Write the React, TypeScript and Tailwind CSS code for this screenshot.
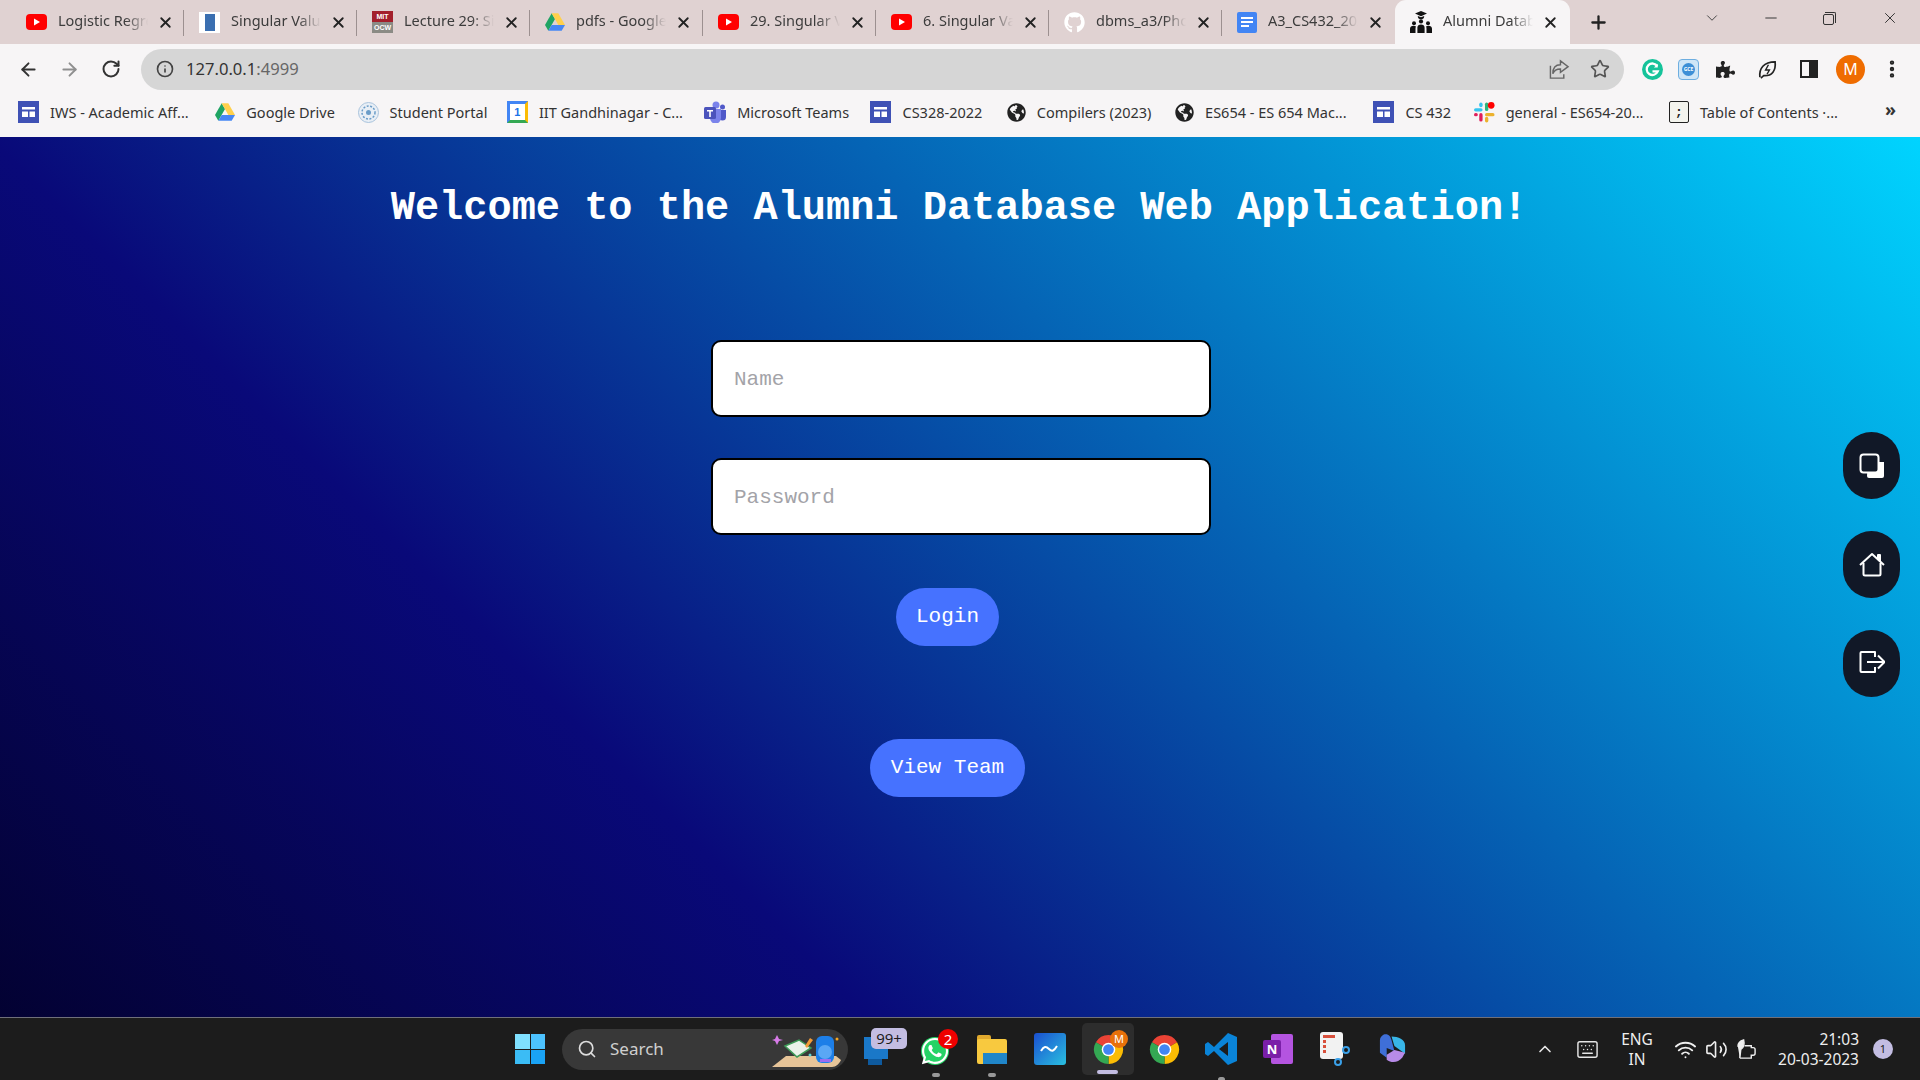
import { ArrowLeft, ArrowRight, ChevronDown, ChevronUp, Info, Keyboard, Minus, MoreVertical, Plus, RotateCw, Search, Star, Volume2, Wifi, X } from "lucide-react";
import { FaGithub, FaGlobeAmericas, FaPuzzlePiece, FaWhatsapp } from "react-icons/fa";
import type { ReactNode } from "react";

const ui = "font-['Noto_Sans','Open_Sans',sans-serif]";
const mono = "font-['Liberation_Mono',monospace]";

function Yt() {
  return (
    <svg viewBox="0 0 21 16" className="w-[21px] h-[16px] shrink-0">
      <rect width="21" height="16" rx="4" fill="#ff0000" />
      <path d="M8 4.5 14 8 8 11.5Z" fill="#fff" />
    </svg>
  );
}

function Drive({ size = "w-[20px] h-[18px]" }: { size?: string }) {
  return (
    <svg viewBox="0 0 24 21" className={`${size} shrink-0`}>
      <path d="M8 0 12 7 4 21 0 14Z" fill="#1fa463" />
      <path d="M8 0h8l8 14h-8Z" fill="#ffd04b" />
      <path d="M4 21 8 14h16l-4 7Z" fill="#4687f4" />
    </svg>
  );
}

function DocBlue() {
  return (
    <div className="w-[21px] h-[21px] bg-white flex items-center justify-center shrink-0">
      <div className="w-[10px] h-[17px] bg-[#3b6fb0]" />
    </div>
  );
}

function Ocw() {
  return (
    <div className="w-[21px] h-[22px] flex flex-col shrink-0 font-['Liberation_Sans',sans-serif] font-bold text-[7px] leading-[11px] text-center text-white overflow-hidden">
      <div className="bg-[#a3202c]">MIT</div>
      <div className="bg-[#8b8b85]">OCW</div>
    </div>
  );
}

function GDoc() {
  return (
    <div className="w-[20px] h-[21px] bg-[#4285f4] rounded-[2px] flex flex-col gap-[2px] items-start justify-center px-[4px] shrink-0">
      <div className="w-full h-[2px] bg-white" />
      <div className="w-full h-[2px] bg-white" />
      <div className="w-[8px] h-[2px] bg-white" />
    </div>
  );
}

function Alumni() {
  return (
    <svg viewBox="0 0 22 22" className="w-[22px] h-[22px] shrink-0" fill="#111">
      <path d="M11 0 17 2.6 11 5.2 5 2.6Z" />
      <path d="M7.8 5a3.2 3.2 0 0 0 6.4 0L11 6.3Z" />
      <circle cx="11" cy="10.4" r="2.1" />
      <circle cx="4" cy="12.2" r="2" />
      <circle cx="18" cy="12.2" r="2" />
      <path d="M7.4 22v-5.2c0-2 1.5-3.2 3.6-3.2s3.6 1.2 3.6 3.2V22Z" />
      <path d="M0 22v-4.2c0-2 1.5-3 3.5-3 1 0 1.8.2 2.5.8-.4.6-.5 1.3-.5 2.2V22Z" />
      <path d="M22 22v-4.2c0-2-1.5-3-3.5-3-1 0-1.8.2-2.5.8.4.6.5 1.3.5 2.2V22Z" />
    </svg>
  );
}

function Sites() {
  return (
    <svg viewBox="0 0 21 22" className="w-[21px] h-[22px] shrink-0">
      <rect width="21" height="22" fill="#3f51b5" />
      <path d="M4 6h13v2.5H4ZM4 10.500h6V16H4ZM11.500 10.500H17V16h-5.500Z" fill="#fff" />
    </svg>
  );
}

function Portal() {
  return (
    <svg viewBox="0 0 21 21" className="w-[21px] h-[21px] shrink-0">
      <circle cx="10.500" cy="10.500" r="10" fill="#e8eef5" stroke="#a9c3dc" />
      <circle cx="10.500" cy="10.500" r="6.500" fill="none" stroke="#6a9cc8" strokeWidth="1.500" strokeDasharray="2 1.500" />
      <circle cx="10.500" cy="10.500" r="2.500" fill="#6a9cc8" />
    </svg>
  );
}

function Cal() {
  return (
    <div className="w-[21px] h-[22px] shrink-0 bg-white border-t-[3px] border-t-[#4285f4] border-l-[3px] border-l-[#4285f4] border-r-[3px] border-r-[#fbbc04] border-b-[3px] border-b-[#34a853] flex items-center justify-center font-['Liberation_Sans',sans-serif] font-bold text-[11px] leading-none text-[#1a73e8]">
      1
    </div>
  );
}

function Teams() {
  return (
    <svg viewBox="0 0 22 22" className="w-[22px] h-[22px] shrink-0">
      <circle cx="12" cy="4" r="3.500" fill="#7b83eb" />
      <circle cx="18.500" cy="6" r="2.500" fill="#5059c9" />
      <path d="M15 9h7v7a3.500 3.500 0 0 1-7 0Z" fill="#5059c9" />
      <path d="M6 8h11v9a5 5 0 0 1-11 0Z" fill="#7b83eb" />
      <rect y="6" width="12" height="12" rx="1.500" fill="#4b53bc" />
      <path d="M3 9h6v1.500H6.800V16H5.200v-5.500H3Z" fill="#fff" />
    </svg>
  );
}

function Globe() {
  return <FaGlobeAmericas className="w-[19px] h-[19px] shrink-0 text-[#222]" />;
}

function Slack() {
  return (
    <svg viewBox="0 0 22 22" className="w-[21px] h-[22px] shrink-0">
      <rect x="0" y="7" width="9" height="3.500" rx="1.750" fill="#36c5f0" />
      <rect x="5.500" y="1" width="3.500" height="5" rx="1.750" fill="#36c5f0" />
      <rect x="11.500" y="1" width="3.500" height="9" rx="1.750" fill="#2eb67d" />
      <circle cx="18" cy="4" r="3.500" fill="#ff0000" />
      <rect x="11.500" y="12" width="10" height="3.500" rx="1.750" fill="#ecb22e" />
      <rect x="11.500" y="16" width="3.500" height="6" rx="1.750" fill="#ecb22e" />
      <rect x="5.500" y="12" width="3.500" height="9" rx="1.750" fill="#e01e5a" />
      <rect x="0" y="12" width="4" height="3.500" rx="1.750" fill="#e01e5a" />
    </svg>
  );
}

function Toc() {
  return (
    <div className="w-[20px] h-[22px] shrink-0 bg-[#f4f4ee] border border-[#222] rounded-[2px] flex items-center justify-center font-['Liberation_Mono',monospace] font-bold text-[13px] leading-none text-[#222]">
      ;
    </div>
  );
}

function Chrome({ size = "w-[31px] h-[31px]" }: { size?: string }) {
  return (
    <svg viewBox="0 0 32 32" className={size}>
      <path d="M16 16 3 8.500A15 15 0 0 1 29 8.500Z" fill="#ea4335" />
      <path d="M16 16 29 8.500A15 15 0 0 1 16 31Z" fill="#fbbc04" />
      <path d="M16 16 16 31A15 15 0 0 1 3 8.500Z" fill="#34a853" />
      <circle cx="16" cy="16" r="7" fill="#fff" />
      <circle cx="16" cy="16" r="5.500" fill="#4285f4" />
    </svg>
  );
}

const tabs: { title: string; icon: ReactNode; sep?: boolean }[] = [
  { title: "Logistic Regression", icon: <Yt /> },
  { title: "Singular Value", icon: <DocBlue /> },
  { title: "Lecture 29: Singular", icon: <Ocw /> },
  { title: "pdfs - Google Drive", icon: <Drive /> },
  { title: "29. Singular Value", icon: <Yt /> },
  { title: "6. Singular Value", icon: <Yt /> },
  { title: "dbms_a3/Photos", icon: <FaGithub className="w-[21px] h-[21px] shrink-0 text-white" /> },
  { title: "A3_CS432_2023", icon: <GDoc />, sep: false },
];

const bookmarks: { label: string; icon: ReactNode; w: string }[] = [
  { label: "IWS - Academic Aff...", icon: <Sites />, w: "w-[145px]" },
  { label: "Google Drive", icon: <Drive />, w: "w-[91px]" },
  { label: "Student Portal", icon: <Portal />, w: "w-[97px]" },
  { label: "IIT Gandhinagar - C...", icon: <Cal />, w: "w-[145px]" },
  { label: "Microsoft Teams", icon: <Teams />, w: "w-[113px]" },
  { label: "CS328-2022", icon: <Sites />, w: "w-[84px]" },
  { label: "Compilers (2023)", icon: <Globe />, w: "w-[118px]" },
  { label: "ES654 - ES 654 Mac...", icon: <Globe />, w: "w-[148px]" },
  { label: "CS 432", icon: <Sites />, w: "w-[48px]" },
  { label: "general - ES654-20...", icon: <Slack />, w: "w-[143px]" },
  { label: "Table of Contents ·...", icon: <Toc />, w: "w-[139px]" },
];

function Tab({ title, icon, sep = true }: { title: string; icon: ReactNode; sep?: boolean }) {
  return (
    <div className="w-[173px] h-[44px] flex items-center pl-[15px] shrink-0 relative">
      {icon}
      <span className="ml-[11px] mb-[2px] w-[90px] overflow-hidden whitespace-nowrap text-[14.500px] text-[#3c3c3c] [mask-image:linear-gradient(to_right,#000_75%,transparent)]">
        {title}
      </span>
      <X className="ml-[9px] w-[17px] h-[17px] text-[#222] shrink-0" strokeWidth={2.6} />
      {sep && <div className="absolute right-0 top-[10px] h-[26px] w-px bg-[#9c9090]" />}
    </div>
  );
}

function TabStrip() {
  return (
    <div className="h-[44px] bg-[#e0d2d2] flex items-start pl-[11px] shrink-0">
      {tabs.map(t => (
        <Tab key={t.title} {...t} />
      ))}
      <div className="w-[175px] h-[44px] bg-[#f7f5f6] rounded-t-[11px] flex items-center pl-[15px] shrink-0">
        <Alumni />
        <span className="ml-[11px] mb-[2px] w-[90px] overflow-hidden whitespace-nowrap text-[14.500px] text-[#3c3c3c] [mask-image:linear-gradient(to_right,#000_75%,transparent)]">
          Alumni Database
        </span>
        <X className="ml-[9px] w-[17px] h-[17px] text-[#222] shrink-0" strokeWidth={2.6} />
      </div>
      <Plus className="ml-[18px] mt-[12px] w-[21px] h-[21px] text-[#222] shrink-0" strokeWidth={2.6} />
      <ChevronDown className="ml-[94px] mt-[9px] w-[18px] h-[18px] text-[#444] shrink-0" strokeWidth={1.300} />
      <Minus className="ml-[41px] mt-[9px] w-[18px] h-[18px] text-[#333] shrink-0" strokeWidth={1.300} />
      <div className="ml-[43px] mt-[12px] w-[13px] h-[13px] relative shrink-0">
        <div className="absolute left-0 bottom-0 w-[11px] h-[11px] border border-[#333] rounded-[2px]" />
        <div className="absolute right-0 top-0 w-[11px] h-[11px] border-t border-r border-[#333] rounded-tr-[2px]" />
      </div>
      <X className="ml-[45px] mt-[9px] w-[18px] h-[18px] text-[#333] shrink-0" strokeWidth={1.300} />
    </div>
  );
}

function Toolbar() {
  return (
    <div className="h-[48px] bg-[#f7f5f6] flex items-center pl-[18px] pt-[2px] shrink-0">
      <ArrowLeft className="w-[21px] h-[21px] text-[#333]" strokeWidth={2.200} />
      <ArrowRight className="ml-[20px] w-[21px] h-[21px] text-[#8f8f8f]" strokeWidth={2.200} />
      <RotateCw className="ml-[21px] w-[20px] h-[20px] text-[#333]" strokeWidth={2.400} />
      <div className="ml-[20px] w-[1483px] h-[41px] rounded-full bg-[#d6d6d6] flex items-center pl-[15px]">
        <Info className="w-[18px] h-[18px] text-[#444]" strokeWidth={2.200} />
        <span className="ml-[12px] text-[16.600px] text-[#333]">
          127.0.0.1<span className="text-[#666]">:4999</span>
        </span>
        <svg viewBox="0 0 22 22" className="ml-auto w-[21px] h-[21px]" fill="none" stroke="#666" strokeWidth="1.500">
          <path d="M1.500 7v13h14v-4" />
          <path d="M12 2l8 6-8 6v-3.500c-4 0-6.500 1-8 5 0-6 3-9.500 8-9.500Z" />
        </svg>
        <Star className="ml-[20px] mr-[14px] w-[20px] h-[20px] text-[#555]" strokeWidth={2} />
      </div>
      <svg viewBox="0 0 22 22" className="ml-[18px] w-[21px] h-[21px]">
        <circle cx="11" cy="11" r="11" fill="#15c39a" />
        <path d="M16 7.500A6 6 0 1 0 16.500 13H11" fill="none" stroke="#fff" strokeWidth="2.400" />
        <path d="M16.500 5v4h-4Z" fill="#fff" />
      </svg>
      <div className="ml-[15px] w-[21px] h-[21px] rounded-[4px] bg-[#cfe6f7] border border-[#6eaee0] flex items-center justify-center">
        <div className="w-[13px] h-[13px] rounded-full bg-[#3d8fd6] flex items-center justify-center text-white text-[5px] leading-none font-bold">GCE</div>
      </div>
      <FaPuzzlePiece className="ml-[17px] w-[19px] h-[19px] text-[#222]" />
      <svg viewBox="0 0 20 20" className="ml-[23px] w-[19px] h-[19px]" fill="none" stroke="#222" strokeWidth="1.800">
        <path d="M2 18C1 9 6 2 18 2c1 9-3 15-12 14.500L3 19" />
        <path d="M11 5 8 10.500h4L9.500 15" strokeWidth="1.500" />
      </svg>
      <div className="ml-[23px] w-[18px] h-[18px] border-2 border-[#222] flex justify-end">
        <div className="w-[7px] h-full bg-[#222]" />
      </div>
      <div className={`ml-[18px] w-[29px] h-[29px] rounded-full bg-[#ef6c00] flex items-center justify-center text-white text-[16px] ${ui}`}>M</div>
      <MoreVertical className="ml-[16px] w-[22px] h-[22px] text-[#222]" strokeWidth={2.800} />
    </div>
  );
}

function Bookmarks() {
  return (
    <div className="h-[45px] bg-[#f7f5f6] flex items-center pl-[18px] pb-[5px] gap-[20.300px] relative shrink-0">
      {bookmarks.map(b => (
        <div key={b.label} className="flex items-center gap-[11px] shrink-0">
          {b.icon}
          <span className={`${b.w} whitespace-nowrap text-[14.500px] leading-[20px] text-[#333]`}>{b.label}</span>
        </div>
      ))}
      <span className="absolute right-[24px] top-[5px] text-[18px] leading-[24px] font-bold text-[#333]">»</span>
    </div>
  );
}

function SideBtn({ children }: { children: ReactNode }) {
  return <button className="w-[57px] h-[67px] rounded-full bg-[#111827] flex items-center justify-center text-white">{children}</button>;
}

function LoginPage() {
  return (
    <main className={`relative h-[880px] bg-[linear-gradient(45deg,#020024_0%,#090979_35%,#00d4ff_100%)] bg-[length:100%_1050px] bg-no-repeat flex flex-col items-center shrink-0 ${mono}`}>
      <h1 className="mt-[47px] mr-[2px] text-[40.300px] leading-[48px] font-bold text-white whitespace-pre">Welcome to the Alumni Database Web Application!</h1>
      <input placeholder="Name" className={`mt-[108px] ml-[2px] w-[500px] h-[77px] rounded-[10px] border-2 border-black bg-white px-[21px] pt-[2px] text-[21px] placeholder:text-[#a3a3a8] ${mono}`} />
      <input placeholder="Password" className={`mt-[41px] ml-[2px] w-[500px] h-[77px] rounded-[10px] border-2 border-black bg-white px-[21px] pt-[2px] text-[21px] placeholder:text-[#a3a3a8] ${mono}`} />
      <button className="mt-[53px] mr-[25px] h-[58px] w-[103px] rounded-[29px] bg-[#4672ff] text-white text-[21px]">Login</button>
      <button className="mt-[93px] mr-[25px] h-[58px] w-[155px] rounded-[29px] bg-[#4672ff] text-white text-[21px]">View Team</button>

      <div className="absolute right-[20px] top-[295px] flex flex-col gap-[32px]">
        <SideBtn>
          <svg viewBox="0 0 26 26" className="w-[26px] h-[26px]" fill="none" stroke="currentColor" strokeWidth="2">
            <path d="M9 9h16v14a2 2 0 0 1-2 2H10a2 2 0 0 1-2-2Z" fill="currentColor" stroke="none" />
            <rect x="1.500" y="1.500" width="18" height="18" rx="3" fill="#111827" />
          </svg>
        </SideBtn>
        <SideBtn>
          <svg viewBox="0 0 26 26" className="w-[26px] h-[26px]" fill="none" stroke="currentColor" strokeWidth="2" strokeLinejoin="round">
            <path d="M1 13 13 2l12 11" />
            <path d="M4.500 11v11a1.500 1.500 0 0 0 1.500 1.500h14a1.500 1.500 0 0 0 1.500-1.500V11" />
            <path d="M19 3h2v6l-2-2Z" fill="currentColor" />
          </svg>
        </SideBtn>
        <SideBtn>
          <svg viewBox="0 0 26 26" className="w-[26px] h-[26px] mb-[3px]" fill="none" stroke="currentColor" strokeWidth="2" strokeLinejoin="round">
            <path d="M16 8V3H2.500a1 1 0 0 0-1 1v18a1 1 0 0 0 1 1H16v-5" />
            <path d="M8 13h17M19 6.500 25.500 13 19 19.500" />
          </svg>
        </SideBtn>
      </div>
    </main>
  );
}

function Taskbar() {
  return (
    <footer className={`h-[63px] bg-[#1c1c1c] border-t border-[#70707a] flex items-center pl-[515px] text-white shrink-0 ${ui}`}>
      <div className="grid grid-cols-2 gap-[1px] w-[30px] h-[30px] shrink-0">
        <div className="bg-[#7fe0ff]" />
        <div className="bg-[#4cc2ff]" />
        <div className="bg-[#3bbcf5]" />
        <div className="bg-[#1aa3f5]" />
      </div>
      <div className="ml-[17px] w-[286px] h-[41px] rounded-full bg-[#383838] flex items-center pl-[15px] shrink-0 relative">
        <Search className="w-[20px] h-[20px] text-[#ddd]" strokeWidth={2} />
        <span className="ml-[13px] text-[17px] text-[#cfcfcf]">Search</span>
        <svg viewBox="0 0 70 36" className="absolute right-[6px] top-[3px] w-[70px] h-[36px]">
          <path d="M0 35 14 24h50l5 4c-2 4-5 7-9 7Z" fill="#e6c498" />
          <path d="M13 14 27 8l12 8-14 9Z" fill="#eaf2ea" stroke="#3e9b58" strokeWidth="1.500" />
          <path d="M33 14 38 6l3 2-6 8Z" fill="#f29b38" />
          <rect x="44" y="4" width="18" height="27" rx="6" fill="#1d7fe8" />
          <circle cx="53" cy="20" r="7" fill="#5aa7f5" />
          <rect x="48" y="27" width="11" height="3" fill="#9a6cf0" />
          <path d="M5 3 7 7l4 1-4 1-2 4-2-4-3-1 3-1Z" fill="#d77be8" />
          <circle cx="38" cy="23" r="1.500" fill="#5fd0d0" />
          <circle cx="65" cy="7" r="1.500" fill="#f5a623" />
        </svg>
      </div>
      <div className="ml-[16px] w-[43px] h-[40px] relative shrink-0">
        <div className="absolute left-0 top-[8px] w-[24px] h-[22px] bg-[#1a78c8]" />
        <div className="absolute left-[4px] top-[30px] w-[14px] h-[6px] bg-[#0e5a9e]" />
        <div className="absolute left-[7px] -top-[1px] w-[36px] h-[21px] rounded-[5px] bg-[#c3bde2] text-[#1c1c1c] text-[15px] leading-[21px] text-center">99+</div>
      </div>
      <div className="ml-[14px] w-[32px] h-[40px] relative shrink-0">
        <div className="absolute left-0 top-[8px] w-[28px] h-[28px] rounded-full bg-[#25d366]" />
        <FaWhatsapp className="absolute -left-[1px] top-[7px] w-[30px] h-[30px] text-white" />
        <div className="absolute left-[17px] top-[0px] w-[20px] h-[20px] rounded-full bg-[#ee0000] text-white text-[15px] leading-[20px] text-center">2</div>
        <div className="absolute left-[11px] top-[44px] w-[8px] h-[4px] rounded-full bg-[#999]" />
      </div>
      <div className="ml-[24px] w-[30px] h-[30px] relative shrink-0 mt-[2px]">
        <div className="absolute left-0 top-0 w-[14px] h-[6px] bg-[#e0a92e] rounded-t-[2px]" />
        <div className="absolute left-0 top-[4px] w-full h-[25px] bg-[#f8c93f] rounded-[2px]" />
        <div className="absolute left-[6px] top-[18px] w-[24px] h-[11px] bg-[#2086c9]" />
        <div className="absolute left-[11px] top-[38px] w-[8px] h-[4px] rounded-full bg-[#999]" />
      </div>
      <div className="ml-[27px] w-[32px] h-[32px] rounded-[3px] bg-[linear-gradient(135deg,#1a4fd0,#2ac0e0)] flex items-center justify-center shrink-0">
        <svg viewBox="0 0 24 24" className="w-[24px] h-[24px]" fill="none" stroke="#fff" strokeWidth="2">
          <path d="M3 14c3-5 5-5 8-2s5 2 8-3" />
        </svg>
      </div>
      <div className="ml-[16px] w-[52px] h-[52px] rounded-[5px] bg-[#2d2d2d] flex items-center justify-center relative shrink-0">
        <Chrome />
        <div className="absolute right-[6px] top-[7px] w-[18px] h-[18px] rounded-full bg-[#e8710a] text-white text-[11px] leading-[18px] text-center">M</div>
        <div className="absolute left-[15px] bottom-[1px] w-[21px] h-[4px] rounded-full bg-[#c3bde2]" />
      </div>
      <div className="ml-[15px] shrink-0 flex">
        <Chrome />
      </div>
      <div className="ml-[25px] w-[32px] h-[32px] relative shrink-0">
        <svg viewBox="0 0 32 32" className="w-[32px] h-[32px]">
          <path d="M23 0 32 4v24l-9 4L9 18l-6 5-3-2v-10l3-2 6 5Z" fill="#0a84d8" />
          <path d="M23 9v14l-9-7Z" fill="#1c1c1c" />
        </svg>
        <div className="absolute left-[13px] top-[44px] w-[7px] h-[5px] rounded-full bg-[#999]" />
      </div>
      <div className="ml-[26px] w-[30px] h-[30px] relative shrink-0">
        <div className="absolute right-0 top-0 w-[22px] h-full rounded-[2px] bg-[#b454e0]" />
        <div className="absolute left-0 top-[6px] w-[18px] h-[18px] rounded-[2px] bg-[#7a1fa8] text-white text-[13px] leading-[18px] text-center font-bold">N</div>
      </div>
      <div className="ml-[27px] w-[30px] h-[34px] relative shrink-0">
        <div className="absolute left-0 top-0 w-[23px] h-[27px] rounded-[3px] bg-[#f2f2f2] flex flex-col gap-[2px] pl-[3px] pt-[3px]">
          <div className="w-[12px] h-[3px] bg-[#d8503c]" />
          <div className="w-[3px] h-[3px] bg-[#d8503c]" />
          <div className="w-[3px] h-[3px] bg-[#d8503c]" />
          <div className="w-[3px] h-[3px] bg-[#d8503c]" />
        </div>
        <div className="absolute right-0 top-[14px] w-[8px] h-[8px] rounded-full border-2 border-[#3aa0e8]" />
        <div className="absolute right-[8px] bottom-0 w-[8px] h-[8px] rounded-full border-2 border-[#3aa0e8]" />
      </div>
      <svg viewBox="0 0 30 32" className="ml-[28px] w-[29px] h-[32px] shrink-0">
        <path d="M6 1c5-1 7 2 8 6l3 11-8-3v10L2 20V7c0-3 2-5 4-6Z" fill="#3f6fd8" />
        <path d="M14 3c7 0 14 3 14 9v9L17 13Z" fill="#38b6e8" />
        <path d="M9 27c5 4 12 3 16-2l3-5-11-3-8 5Z" fill="#b78be8" />
      </svg>
      <ChevronUp className="ml-[128px] w-[20px] h-[20px] text-[#e5e5e5] shrink-0" strokeWidth={2} />
      <Keyboard className="ml-[21px] w-[23px] h-[23px] text-[#e5e5e5] shrink-0" strokeWidth={1.500} />
      <div className="ml-[20px] w-[36px] text-center text-[15.500px] leading-[20px] text-[#eee] shrink-0">
        <div className="whitespace-nowrap">ENG</div>
        <div>IN</div>
      </div>
      <Wifi className="ml-[19px] w-[23px] h-[23px] text-[#eee] shrink-0" strokeWidth={2} />
      <Volume2 className="ml-[8px] w-[23px] h-[23px] text-[#eee] shrink-0" strokeWidth={1.700} />
      <svg viewBox="0 0 22 24" className="ml-[8px] w-[21px] h-[23px] shrink-0" fill="none" stroke="#eee" strokeWidth="1.500">
        <path d="M4 21h12v-3h2a2 2 0 0 0 2-2v-4a2 2 0 0 0-2-2h-2V8H9" />
        <path d="M2 9c0-4 2-6 6-7 1 4 0 8-3 10l-1 9" fill="#eee" />
      </svg>
      <div className="ml-[20px] w-[82px] text-right text-[15.500px] leading-[20px] text-[#eee] shrink-0">
        <div>21:03</div>
        <div className="whitespace-nowrap">20-03-2023</div>
      </div>
      <div className="ml-[14px] w-[20px] h-[20px] rounded-full bg-[#c3bde2] text-[#1c1c1c] text-[11px] leading-[20px] text-center shrink-0">1</div>
    </footer>
  );
}

export default function App() {
  return (
    <div className={`w-[1920px] h-[1080px] overflow-hidden flex flex-col ${ui}`}>
      <TabStrip />
      <Toolbar />
      <Bookmarks />
      <LoginPage />
      <Taskbar />
    </div>
  );
}
